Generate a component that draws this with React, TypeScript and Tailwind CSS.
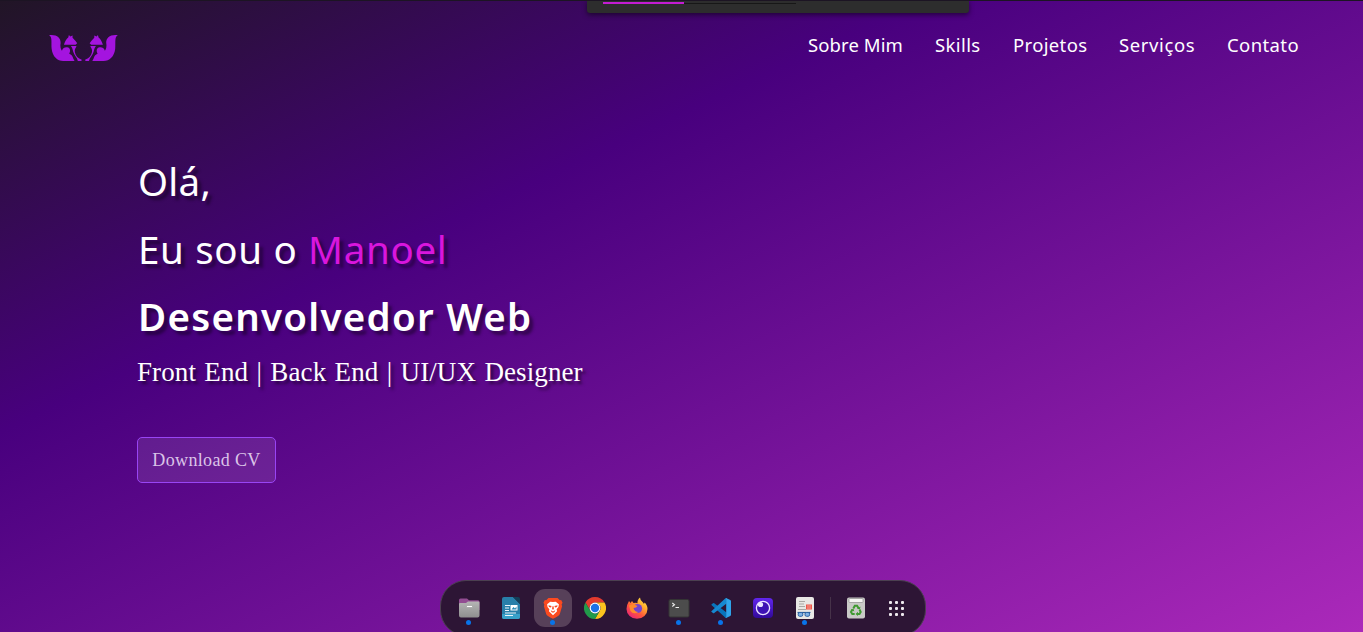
import type { ReactNode } from "react";

const sans = "font-['Noto_Sans','Open_Sans',sans-serif]";
const slab = "font-['Liberation_Serif',serif]";

function Fox() {
  return (
    <g>
      <path d="M27 30C50 27 63 38 62 54C60 64 62 72 66 77C69 69 75 66 82 67C91 69 93 77 88 86C94 88 99 94 100 101L104 108H70C52 108 38 95 35 72C33 52 38 38 27 30Z" />
      <path d="M87 30L91 34L98 31V38L107 48L112 55L107 59L72 59C75 49 79 42 85 37Z" />
      <path d="M93 63H110C108 69 103 73 105 82C107 93 115 101 125 104V108H114C112 97 103 91 100 80C98 73 97 68 93 63Z" />
    </g>
  );
}

function Logo() {
  return (
    <svg viewBox="27 27 208 84" className="h-[28px] w-[69px] fill-[#a414df]">
      <Fox />
      <g transform="translate(261.5 0) scale(-1 1)"><Fox /></g>
    </svg>
  );
}

function Files() {
  return (
    <svg viewBox="0 0 22 22" className="size-[22px]">
      <path d="M1 3a1.500 1.500 0 0 1 1.500-1.500H9l2 1.800h9A1.500 1.500 0 0 1 21.500 5v8H1Z" fill="#924d92" />
      <defs><linearGradient id="fg" x1="0" y1="0" x2="0" y2="1"><stop stopColor="#b5b5b5" /><stop offset="1" stopColor="#8e8e8e" /></linearGradient></defs>
      <path d="M1 7q0-1 1-1h6l2-1.500h10.500q1 0 1 1v13q0 2-2 2h-16.500q-2 0-2-2Z" fill="url(#fg)" />
      <rect x="8.500" y="8.500" width="6" height="2" rx=".5" fill="#fff" stroke="#888" strokeWidth=".5" />
    </svg>
  );
}

function Writer() {
  return (
    <svg viewBox="0 0 22 22" className="size-[22px]">
      <path d="M4 0h9l7 7v13q0 2-2 2H4q-2 0-2-2V2q0-2 2-2Z" fill="#287fa9" />
      <path d="M13 0h5q2 0 2 2v5Z" fill="#123f58" />
      <path d="M2 17h18v3q0 2-2 2H4q-2 0-2-2Z" fill="#38a0c8" />
      <path d="M5 8.500h5M5 11h4M5 13.500h4M5 16h11M5 18.500h8" stroke="#e9f5fb" strokeWidth="1.100" />
      <rect x="10.500" y="8" width="7" height="5.500" fill="#fff" /><path d="m11.500 12.500 2-2.500 1.500 1.500 1.500-2v3Z" fill="#2889b5" />
    </svg>
  );
}

function Brave() {
  return (
    <svg viewBox="0 0 22 24" className="h-[22px] w-[20px]">
      <path d="M6 1h10l2.500 2.500 1.500-.3 1.500 3-1 2 .5 2-2.500 8.500q-1 2.500-7.500 5-6.500-2.500-7.500-5L1 10.200l.5-2-1-2 1.500-3 1.500.3Z" fill="#fb4a20" />
      <path d="M11 5.500 14 5l3.500 3-.5 3-2 2.500.5 2-4.500 4.500-4.500-4.500.5-2L5 11l-.5-3L8 5Z" fill="#fff" />
      <path d="m6 9 3.500.8-.8 1.600L6.500 11ZM16 9l-3.500.8.8 1.600 2.200-.4ZM10.400 10h1.200l.4 3-1 1-1-1ZM8.500 14.500l2.500 1.300 2.500-1.300-.8 2-1.700.8-1.700-.8Z" fill="#fb4a20" />
    </svg>
  );
}

function Chrome() {
  return (
    <svg viewBox="0 0 24 24" className="size-[22px]">
      <path d="M12 0A12 12 0 0 1 22.400 6H12a6 6 0 0 0-5.200 9L1.600 6A12 12 0 0 1 12 0Z" fill="#e33b2e" />
      <path d="M22.400 6A12 12 0 0 1 12 24l5.200-9A6 6 0 0 0 12 6Z" fill="#fcc31e" />
      <path d="M12 24A12 12 0 0 1 1.600 6l5.200 9A6 6 0 0 0 17.200 15Z" fill="#219a4a" />
      <circle cx="12" cy="12" r="5.900" fill="#fff" /><circle cx="12" cy="12" r="4.600" fill="#1b72e8" />
    </svg>
  );
}

function Firefox() {
  return (
    <svg viewBox="0 0 22 22" className="size-[22px]">
      <defs><linearGradient id="ff" x1="1" y1="0" x2=".2" y2="1"><stop stopColor="#fff44f" /><stop offset=".35" stopColor="#ffb02e" /><stop offset=".65" stopColor="#ff563b" /><stop offset="1" stopColor="#e6227c" /></linearGradient></defs>
      <path d="M3 4 4.500 6l1.500-2L7.500 6q3-.7 4 .2Q11 3 14 .5q0 3 3 5l1 1.500.5-1.500Q21.500 8 21.500 12a10.500 9.800 0 0 1-21 0q0-4 2.500-8Z" fill="url(#ff)" />
      <circle cx="11.500" cy="11.500" r="4.600" fill="#7345cf" />
      <path d="M3 8.500q2-1.500 5-1l3.500 1.500q-1 1.800-4 2 1 4 5 4-5 3-8-1Z" fill="#ff8b2c" />
    </svg>
  );
}

function Terminal() {
  return (
    <svg viewBox="0 0 22 22" className="size-[22px]">
      <rect x="1" y="2.500" width="20" height="17.500" rx="1.500" fill="#4c4c4c" stroke="#343434" />
      <path d="m4.300 6 2.200 1.800-2.200 1.700M7.500 10.500H11" fill="none" stroke="#eee" strokeWidth="1.100" />
    </svg>
  );
}

function Code() {
  return (
    <svg viewBox="0 0 100 100" className="size-[20px]">
      <path d="M2 33 10 26q3-2 6 0L78 73v26q-4 1-7-2L2 35Z" fill="#0874bb" />
      <path d="M2 66 71 3q3-3 7-2v26L16 75q-3 2-6 0l-8-6q-2-2 0-3Z" fill="#1688d0" />
      <path d="M72 99q4-2 4-7V8q0-5-4-7 3-1 6 0l18 9q4 2 4 6v68q0 4-4 6l-18 9q-3 1-6 0Z" fill="#2fa4ea" />
    </svg>
  );
}

function Orb() {
  return (
    <svg viewBox="0 0 22 22" className="size-[22px]">
      <defs><linearGradient id="orb" x1="0" y1="0" x2="0" y2="1"><stop stopColor="#6226ee" /><stop offset="1" stopColor="#31099a" /></linearGradient></defs>
      <rect x="1" y="1" width="20" height="20" rx="4" fill="url(#orb)" />
      <circle cx="11" cy="11" r="6.600" fill="#3d12b4" stroke="#ebe4ff" strokeWidth="1.300" /><circle cx="8.500" cy="7.500" r="2.600" fill="#ebe4ff" />
    </svg>
  );
}

function Reader() {
  return (
    <svg viewBox="0 0 22 22" className="size-[22px]">
      <rect x="2" y="0" width="18" height="22" rx="2" fill="#e8e7e5" />
      <path d="M5 4.500h6M5 7h5M5 9.500h6M4 12.500h8" stroke="#aaa8a5" />
      <rect x="12" y="7.500" width="6" height="5" fill="#ec5748" /><path d="M13 9h4M13 11h4" stroke="#fbb" strokeWidth=".7" />
      <path d="M3.500 15.500h13" stroke="#2b5f9d" strokeWidth="1.200" /><rect x="4.200" y="15.500" width="4.600" height="3.800" rx="1.500" fill="#7fb2e5" stroke="#2b63a5" /><rect x="11" y="15.500" width="4.600" height="3.800" rx="1.500" fill="#7fb2e5" stroke="#2b63a5" />
    </svg>
  );
}

function Trash() {
  return (
    <svg viewBox="0 0 22 22" className="size-[22px]">
      <rect x="2" y=".5" width="18" height="21" rx="2" fill="#c9c9c7" /><rect x="4" y="1.500" width="14" height="4" rx=".7" fill="#f6f6f4" stroke="#8e8e8c" strokeWidth=".7" />
      <g fill="none" stroke="#3f9a31" strokeWidth="2"><path d="m8.300 11.500 1.500-2.700h2.300l1.500 2.500" /><path d="m14.500 12.500 1.200 2.500-1.200 2h-2.700" /><path d="M9.700 17H7.300L6 15l1.400-2.500" /></g>
      <path d="m12 11.800 3 .4.500-2.800ZM13 14.800 10.500 17l2.500 2ZM9.300 14.500l-.8-2.800-2.700 1Z" fill="#3f9a31" />
    </svg>
  );
}

function Grid() {
  return (
    <div className="mr-[4px] grid grid-cols-3 gap-[3px]">
      {Array.from({ length: 9 }, (_, i) => <span key={i} className="size-[3px] rounded-[1px] bg-[#eee9ee]" />)}
    </div>
  );
}

function Item({ children, dot, active }: { children: ReactNode; dot?: boolean; active?: boolean }) {
  return (
    <div className={`relative mx-[2px] flex size-[38px] shrink-0 items-center justify-center rounded-[11px] ${active ? "bg-[#574059]" : ""}`}>
      {children}
      {dot && <span className="absolute bottom-[2px] left-[16px] size-[5px] rounded-full bg-[#0873e9]" />}
    </div>
  );
}

function Dock() {
  return (
    <div className="absolute top-[579px] left-[440px] flex h-[56px] w-[486px] items-start rounded-[26px] border border-[#4b4050] bg-[#2d1535] pt-[8px] pl-[7px]">
      <Item dot><Files /></Item>
      <Item><Writer /></Item>
      <Item dot active><Brave /></Item>
      <Item><Chrome /></Item>
      <Item><Firefox /></Item>
      <Item dot><Terminal /></Item>
      <Item dot><Code /></Item>
      <Item><Orb /></Item>
      <Item dot><Reader /></Item>
      <span className="mt-[8px] mr-[4px] ml-[4px] h-[22px] w-px shrink-0 bg-[#463249]" />
      <Item><Trash /></Item>
      <Item><Grid /></Item>
    </div>
  );
}

const links = [
  { label: "Sobre Mim", box: "w-[95px] tracking-[0.1px]" },
  { label: "Skills", box: "w-[46px] tracking-[0.4px]" },
  { label: "Projetos", box: "w-[74px] tracking-[0.35px]" },
  { label: "Serviços", box: "w-[76px] tracking-[0.6px]" },
  { label: "Contato", box: "w-[72px] tracking-[0.4px]" },
];

export default function App() {
  return (
    <div className="relative h-[632px] w-full overflow-hidden border-t border-[#1c1423] bg-[linear-gradient(155deg,#211526_0%,#48007e_34%,#ab29ba_100%)]">
      <header className="flex h-[90px] items-start justify-between pt-[33px] pr-[64px] pl-[49px]">
        <Logo />
        <nav className={`-mt-px flex gap-[32px] text-[18.500px] leading-[24px] text-white ${sans}`}>
          {links.map((l) => <a key={l.label} className={`whitespace-nowrap ${l.box}`}>{l.label}</a>)}
        </nav>
      </header>
      <main className="flex flex-col items-start pt-[57px] pl-[137px] text-white">
        <h1 className={`pl-px text-[38.500px] leading-[67.500px] whitespace-nowrap [text-shadow:4px_4px_3px_rgba(0,0,0,0.4)] ${sans}`}>
          <span className="block tracking-[0.3px]">Olá,</span>
          <span className="block tracking-[0.67px]">Eu sou o <span className="text-[#d916dd]">Manoel</span></span>
          <span className="block font-semibold tracking-[1.25px]">Desenvolvedor Web</span>
        </h1>
        <h2 className={`mt-px text-[27px] leading-[40px] tracking-[0.1px] whitespace-nowrap [word-spacing:1.500px] [text-shadow:3px_3px_3px_rgba(0,0,0,0.5)] ${slab}`}>Front End | Back End | UI/UX Designer</h2>
        <button className={`mt-[45px] h-[46px] w-[139px] rounded-[5px] border border-[#9945f5] bg-white/10 pt-[2px] text-[18px] tracking-[0.35px] whitespace-nowrap text-[#dbc4e8] ${slab}`}>Download CV</button>
      </main>
      <div className="absolute -top-px left-[587px] h-[13px] w-[382px] rounded-b-[3px] bg-[#2d2d2d] pt-[2px] pl-[16px] shadow-[0_2px_5px_rgba(0,0,0,0.5)]">
        <div className="flex h-[2px] w-[193px] items-center">
          <span className="h-[2px] w-[81px] bg-[#c41cd3]" />
          <span className="mt-px h-px w-[112px] bg-[#171717]" />
        </div>
      </div>
      <Dock />
    </div>
  );
}
